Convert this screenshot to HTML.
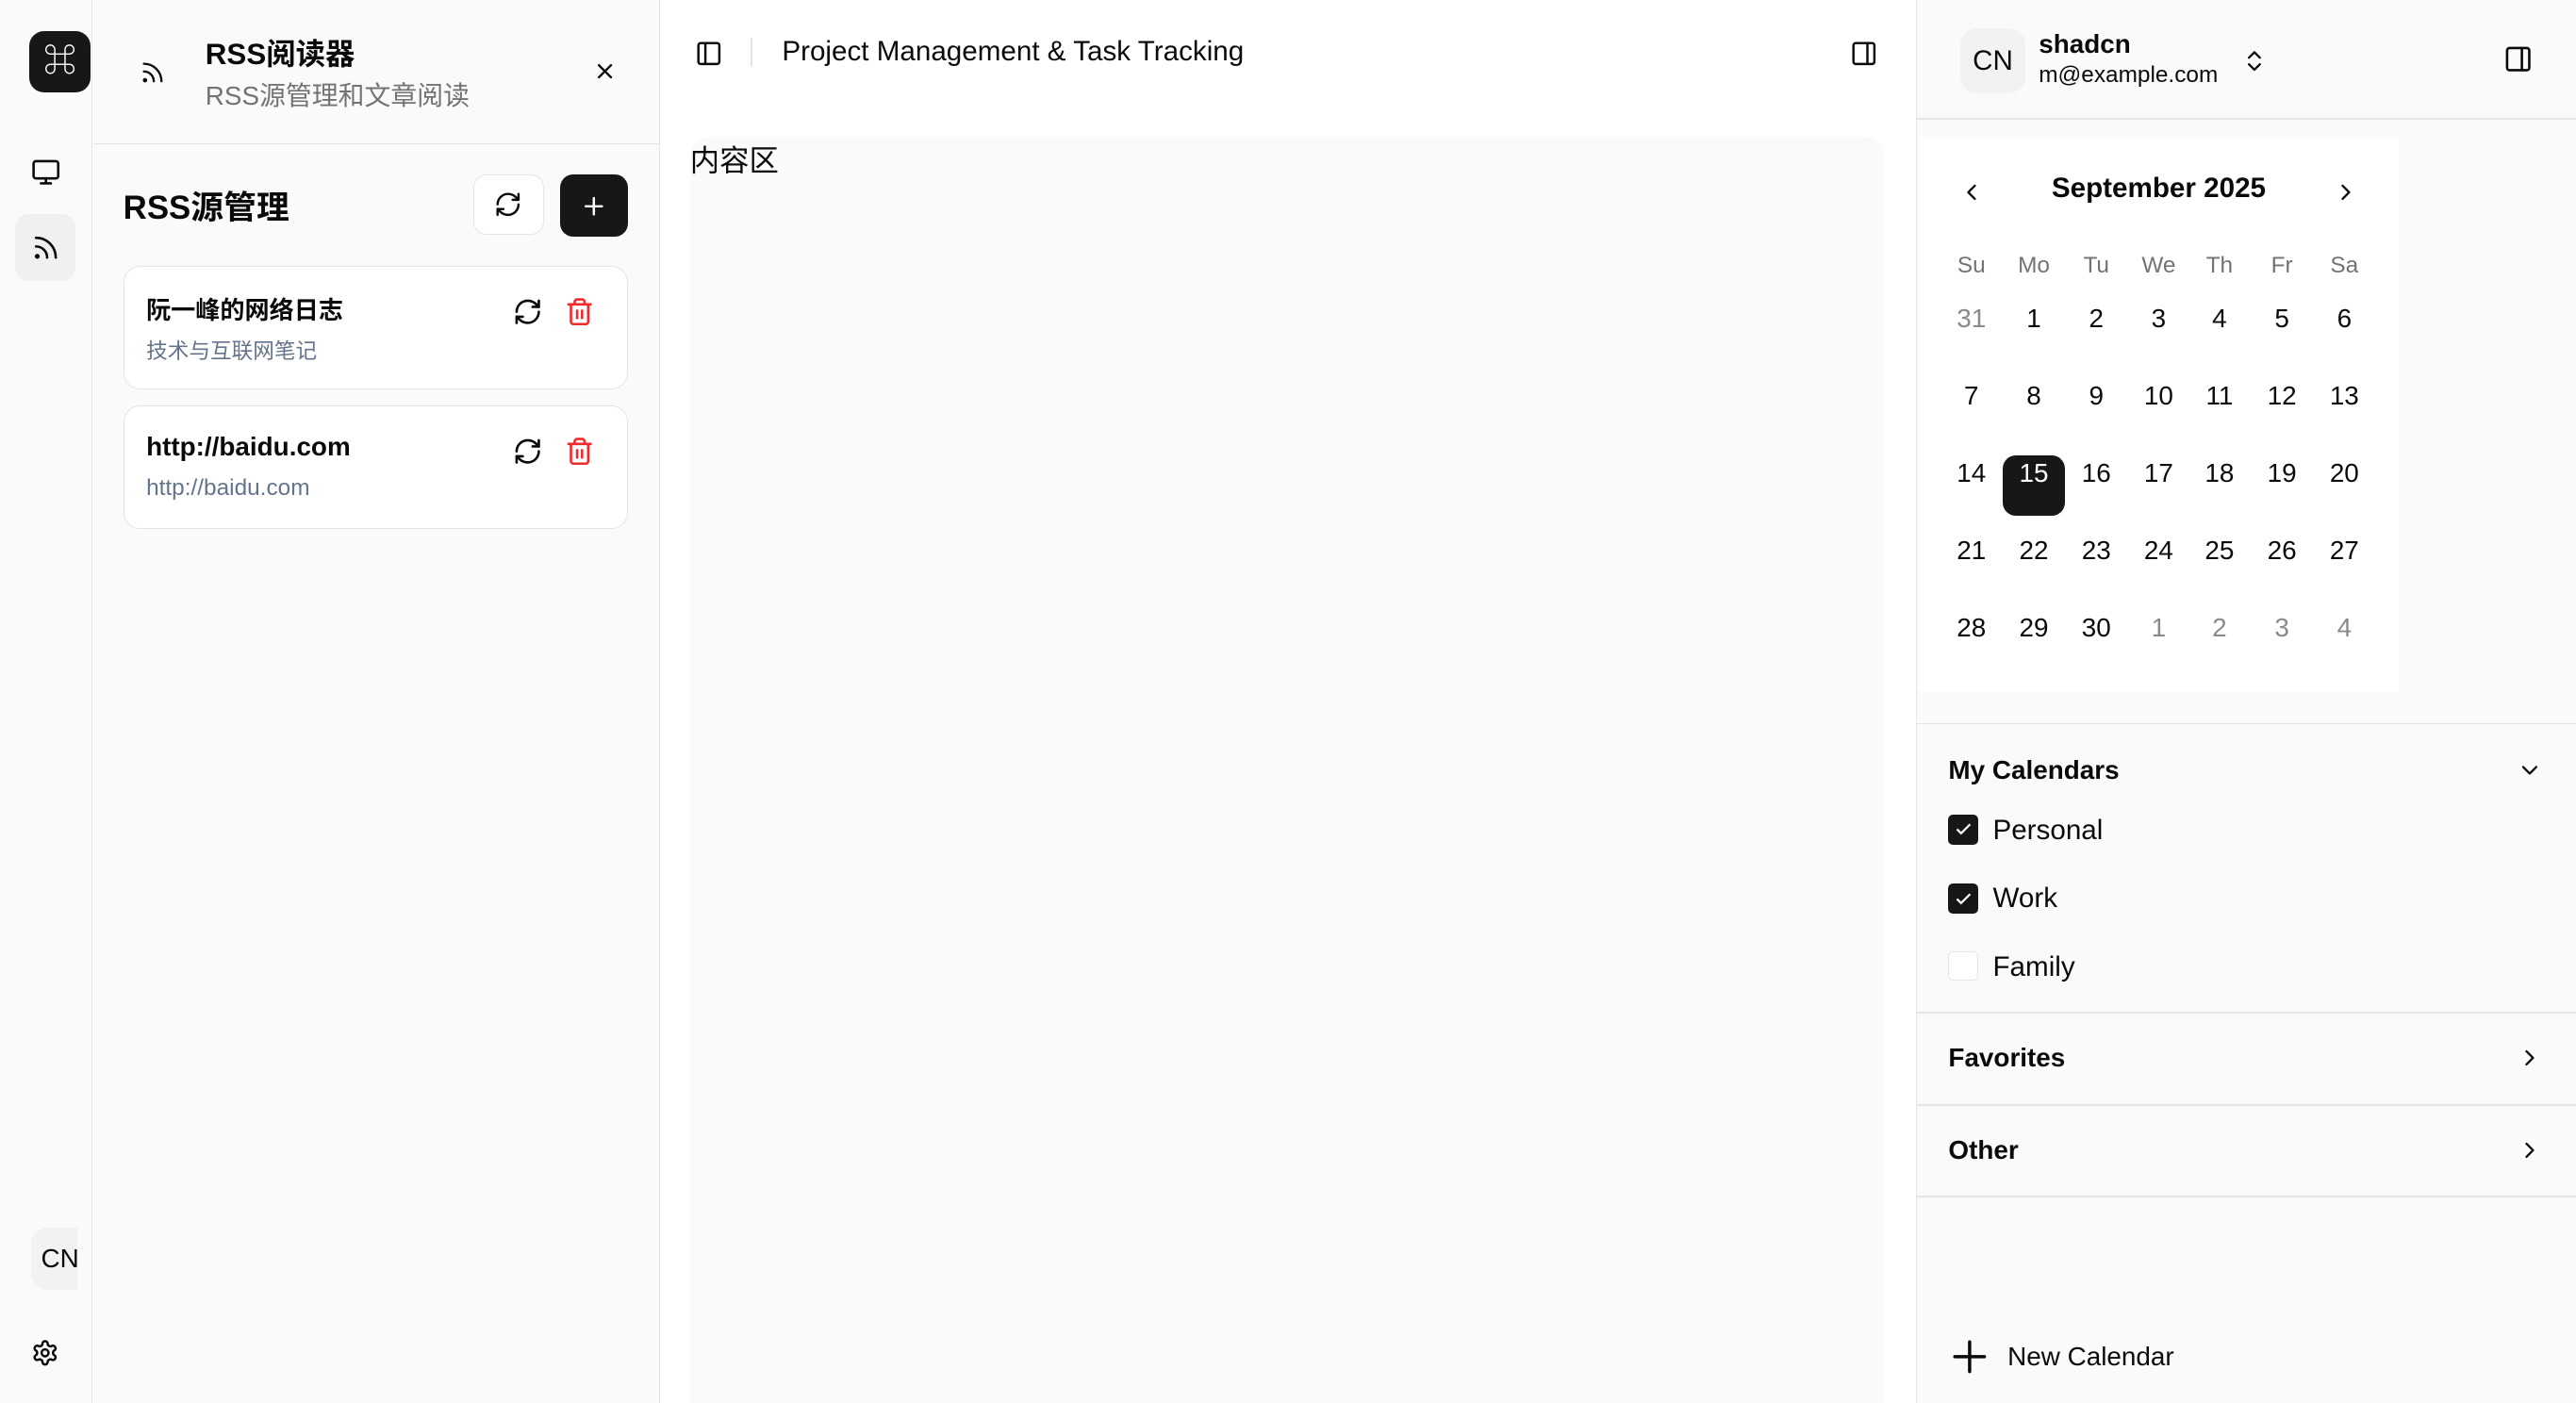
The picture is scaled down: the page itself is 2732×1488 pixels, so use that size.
<!DOCTYPE html>
<html><head><meta charset="utf-8"><style>
*{box-sizing:border-box;margin:0;padding:0}
html,body{width:2732px;height:1488px;overflow:hidden;background:#fff}
#r{position:absolute;left:0;top:0;width:1568px;height:854px;overflow:hidden;zoom:1.74235;font-family:"Liberation Sans","Noto Sans CJK SC",sans-serif;color:#0a0a0a}
.a{position:absolute}
svg{display:block}
.ic{fill:none;stroke:#0a0a0a;stroke-width:2;stroke-linecap:round;stroke-linejoin:round}
.cal span{position:absolute;width:38px;text-align:center;font-size:16px;transform:translateY(-50%)}
.hd{color:#737373;font-size:14px!important}
.mu{color:#8a8a8a}
.line{position:absolute;left:1167px;width:401px;height:1px;background:#e5e5e5}
.cb{position:absolute;left:1186px;width:18px;height:18px;border-radius:3px;background:#171717}
</style></head><body><div id="r">
<!-- rail -->
<div class="a" style="left:0;top:0;width:56px;height:854px;background:#fafafa;border-right:1px solid #e5e5e5"></div>
<div class="a" style="left:18px;top:19px;width:37px;height:37px;border-radius:9px;background:#171717;color:#fff;font-size:20px;text-align:center;line-height:37px">⌘</div>
<svg class="a ic" style="left:19px;top:96px" width="18" height="18" viewBox="0 0 24 24"><rect x="2" y="3" width="20" height="14" rx="2"/><path d="M8 21h8M12 17v4"/></svg>
<div class="a" style="left:9px;top:130px;width:37px;height:41px;border-radius:8px;background:#f0f0f0"></div>
<svg class="a ic" style="left:19px;top:142px" width="18" height="18" viewBox="0 0 24 24"><path d="M4 11a9 9 0 0 1 9 9M4 4a16 16 0 0 1 16 16"/><circle cx="5" cy="19" r="1"/></svg>
<div class="a" style="left:19px;top:747px;width:28px;height:38px;border-radius:10px 0 0 10px;background:#f2f2f2;overflow:hidden;font-size:16px;line-height:38px;padding-left:6px">CN</div>
<svg class="a ic" style="left:19px;top:815px" width="17" height="17" viewBox="0 0 24 24"><path d="M12.22 2h-.44a2 2 0 0 0-2 2v.18a2 2 0 0 1-1 1.73l-.43.25a2 2 0 0 1-2 0l-.15-.08a2 2 0 0 0-2.73.73l-.22.38a2 2 0 0 0 .73 2.730l.15.1a2 2 0 0 1 1 1.72v.51a2 2 0 0 1-1 1.74l-.15.09a2 2 0 0 0-.73 2.73l.22.38a2 2 0 0 0 2.73.73l.15-.08a2 2 0 0 1 2 0l.43.25a2 2 0 0 1 1 1.73V20a2 2 0 0 0 2 2h.44a2 2 0 0 0 2-2v-.18a2 2 0 0 1 1-1.73l.43-.25a2 2 0 0 1 2 0l.15.08a2 2 0 0 0 2.73-.73l.22-.39a2 2 0 0 0-.73-2.73l-.15-.08a2 2 0 0 1-1-1.74v-.5a2 2 0 0 1 1-1.74l.15-.09a2 2 0 0 0 .73-2.73l-.22-.38a2 2 0 0 0-2.73-.73l-.15.08a2 2 0 0 1-2 0l-.43-.25a2 2 0 0 1-1-1.73V4a2 2 0 0 0-2-2z"/><circle cx="12" cy="12" r="3"/></svg>
<!-- panel 2 -->
<div class="a" style="left:57px;top:0;width:345px;height:854px;background:#fafafa;border-right:1px solid #e5e5e5"></div>
<div class="a" style="left:57px;top:87px;width:344px;height:1px;background:#e5e5e5"></div>
<svg class="a ic" style="left:85px;top:36px" width="16" height="16" viewBox="0 0 24 24"><path d="M4 11a9 9 0 0 1 9 9M4 4a16 16 0 0 1 16 16"/><circle cx="5" cy="19" r="1"/></svg>
<div class="a" style="left:125px;top:19px;font-size:18px;font-weight:bold">RSS阅读器</div>
<div class="a" style="left:125px;top:46px;font-size:16px;color:#737373">RSS源管理和文章阅读</div>
<svg class="a ic" style="left:363px;top:38px" width="11" height="11" viewBox="0 0 24 24"><path d="M4 4l16 16M20 4L4 20" stroke-width="3"/></svg>
<div class="a" style="left:75px;top:111px;font-size:20px;font-weight:bold">RSS源管理</div>
<div class="a" style="left:288px;top:106px;width:43px;height:37px;border:1px solid #e5e5e5;border-radius:8px;background:#fff"></div>
<svg class="a ic" style="left:301px;top:116px" width="17" height="17" viewBox="0 0 24 24"><path d="M3 12a9 9 0 0 1 9-9 9.75 9.75 0 0 1 6.74 2.74L21 8"/><path d="M21 3v5h-5"/><path d="M21 12a9 9 0 0 1-9 9 9.75 9.75 0 0 1-6.74-2.74L3 16"/><path d="M8 16H3v5"/></svg>
<div class="a" style="left:341px;top:106px;width:41px;height:38px;border-radius:8px;background:#171717"></div>
<svg class="a" style="left:353px;top:117px" width="17" height="17" viewBox="0 0 24 24" fill="none" stroke="#fff" stroke-width="2" stroke-linecap="round"><path d="M5 12h14M12 5v14"/></svg>
<div class="a" style="left:75px;top:162px;width:307px;height:75px;border:1px solid #e5e5e5;border-radius:10px;background:#fff"></div>
<div class="a" style="left:89px;top:177px;font-size:15px;font-weight:bold">阮一峰的网络日志</div>
<div class="a" style="left:89px;top:203px;font-size:13px;color:#64748b">技术与互联网笔记</div>
<div class="a" style="left:75px;top:247px;width:307px;height:75px;border:1px solid #e5e5e5;border-radius:10px;background:#fff"></div>
<div class="a" style="left:89px;top:263px;font-size:16px;font-weight:bold">http://baidu.com</div>
<div class="a" style="left:89px;top:289px;font-size:14px;color:#64748b">http://baidu.com</div>
<svg class="a ic" style="left:312px;top:181px" width="18" height="18" viewBox="0 0 24 24"><path d="M3 12a9 9 0 0 1 9-9 9.75 9.75 0 0 1 6.74 2.74L21 8"/><path d="M21 3v5h-5"/><path d="M21 12a9 9 0 0 1-9 9 9.75 9.75 0 0 1-6.74-2.74L3 16"/><path d="M8 16H3v5"/></svg>
<svg class="a ic" style="left:312px;top:266px" width="18" height="18" viewBox="0 0 24 24"><path d="M3 12a9 9 0 0 1 9-9 9.75 9.75 0 0 1 6.74 2.74L21 8"/><path d="M21 3v5h-5"/><path d="M21 12a9 9 0 0 1-9 9 9.75 9.75 0 0 1-6.74-2.74L3 16"/><path d="M8 16H3v5"/></svg>
<svg class="a" style="left:344px;top:181px" width="18" height="18" viewBox="0 0 24 24" fill="none" stroke="#ef2b2d" stroke-width="2" stroke-linecap="round"><path d="M3 6h18M19 6v14a2 2 0 0 1-2 2H7a2 2 0 0 1-2-2V6M8 6V4a2 2 0 0 1 2-2h4a2 2 0 0 1 2 2v2M10 11v6M14 11v6"/></svg>
<svg class="a" style="left:344px;top:266px" width="18" height="18" viewBox="0 0 24 24" fill="none" stroke="#ef2b2d" stroke-width="2" stroke-linecap="round"><path d="M3 6h18M19 6v14a2 2 0 0 1-2 2H7a2 2 0 0 1-2-2V6M8 6V4a2 2 0 0 1 2-2h4a2 2 0 0 1 2 2v2M10 11v6M14 11v6"/></svg>
<!-- main -->
<svg class="a ic" style="left:423px;top:24px" width="17" height="17" viewBox="0 0 24 24"><rect x="3" y="3" width="18" height="18" rx="2"/><path d="M9 3v18"/></svg>
<div class="a" style="left:457px;top:23px;width:1px;height:18px;background:#e5e5e5"></div>
<div class="a" style="left:476px;top:22px;font-size:17px">Project Management &amp; Task Tracking</div>
<svg class="a ic" style="left:1126px;top:24px" width="17" height="17" viewBox="0 0 24 24"><rect x="3" y="3" width="18" height="18" rx="2"/><path d="M15 3v18"/></svg>
<div class="a" style="left:420px;top:83px;width:727px;height:771px;border-radius:12px 12px 0 0;background:#fafafa"></div>
<div class="a" style="left:420px;top:84px;font-size:18px">内容区</div>
<!-- right -->
<div class="a" style="left:1166px;top:0;width:402px;height:854px;background:#fafafa;border-left:1px solid #e5e5e5"></div>
<div class="line" style="top:72px"></div>
<div class="a" style="left:1193px;top:17px;width:40px;height:40px;border-radius:10px;background:#f2f2f2;font-size:17px;line-height:40px;text-align:center">CN</div>
<div class="a" style="left:1241px;top:18px;font-size:16px;font-weight:bold">shadcn</div>
<div class="a" style="left:1241px;top:38px;font-size:14px">m@example.com</div>
<svg class="a ic" style="left:1364px;top:28px" width="16" height="18" viewBox="0 0 24 24"><path d="M7 9l5-5 5 5M7 15l5 5 5-5"/></svg>
<svg class="a ic" style="left:1524px;top:27px" width="18" height="18" viewBox="0 0 24 24"><rect x="3" y="3" width="18" height="18" rx="2"/><path d="M15 3v18"/></svg>
<div class="a" style="left:1168px;top:83px;width:292px;height:338px;background:#fff"></div>
<svg class="a ic" style="left:1192px;top:109px" width="16" height="16" viewBox="0 0 24 24"><path d="M15 18l-6-6 6-6"/></svg>
<svg class="a ic" style="left:1420px;top:109px" width="16" height="16" viewBox="0 0 24 24"><path d="M9 18l6-6-6-6"/></svg>
<div class="a" style="left:1168px;top:105px;width:292px;text-align:center;font-size:17px;font-weight:bold">September 2025</div>
<div class="a" style="left:1219px;top:277px;width:38px;height:37px;border-radius:8px;background:#171717"></div>
<div class="a cal" style="left:0;top:1px">
<span class="hd" style="left:1181px;top:161px">Su</span><span class="hd" style="left:1219px;top:161px">Mo</span><span class="hd" style="left:1257px;top:161px">Tu</span><span class="hd" style="left:1295px;top:161px">We</span><span class="hd" style="left:1332px;top:161px">Th</span><span class="hd" style="left:1370px;top:161px">Fr</span><span class="hd" style="left:1408px;top:161px">Sa</span>
<span class="mu" style="left:1181px;top:193px">31</span><span style="left:1219px;top:193px">1</span><span style="left:1257px;top:193px">2</span><span style="left:1295px;top:193px">3</span><span style="left:1332px;top:193px">4</span><span style="left:1370px;top:193px">5</span><span style="left:1408px;top:193px">6</span>
<span style="left:1181px;top:240px">7</span><span style="left:1219px;top:240px">8</span><span style="left:1257px;top:240px">9</span><span style="left:1295px;top:240px">10</span><span style="left:1332px;top:240px">11</span><span style="left:1370px;top:240px">12</span><span style="left:1408px;top:240px">13</span>
<span style="left:1181px;top:287px">14</span><span style="left:1219px;top:287px;color:#fff">15</span><span style="left:1257px;top:287px">16</span><span style="left:1295px;top:287px">17</span><span style="left:1332px;top:287px">18</span><span style="left:1370px;top:287px">19</span><span style="left:1408px;top:287px">20</span>
<span style="left:1181px;top:334px">21</span><span style="left:1219px;top:334px">22</span><span style="left:1257px;top:334px">23</span><span style="left:1295px;top:334px">24</span><span style="left:1332px;top:334px">25</span><span style="left:1370px;top:334px">26</span><span style="left:1408px;top:334px">27</span>
<span style="left:1181px;top:381px">28</span><span style="left:1219px;top:381px">29</span><span style="left:1257px;top:381px">30</span><span class="mu" style="left:1295px;top:381px">1</span><span class="mu" style="left:1332px;top:381px">2</span><span class="mu" style="left:1370px;top:381px">3</span><span class="mu" style="left:1408px;top:381px">4</span>
</div>
<div class="line" style="top:440px"></div>
<div class="a" style="left:1186px;top:460px;font-size:16px;font-weight:bold">My Calendars</div>
<svg class="a ic" style="left:1532px;top:461px" width="16" height="16" viewBox="0 0 24 24"><path d="M6 9l6 6 6-6"/></svg>
<div class="cb" style="top:496px"></div><svg class="a" style="left:1189px;top:499px" width="12" height="12" viewBox="0 0 24 24" fill="none" stroke="#fff" stroke-width="2.5"><path d="M4 12l5 5 11-11"/></svg>
<div class="a" style="left:1213px;top:496px;font-size:17px">Personal</div>
<div class="cb" style="top:538px"></div><svg class="a" style="left:1189px;top:541px" width="12" height="12" viewBox="0 0 24 24" fill="none" stroke="#fff" stroke-width="2.5"><path d="M4 12l5 5 11-11"/></svg>
<div class="a" style="left:1213px;top:537px;font-size:17px">Work</div>
<div class="cb" style="top:579px;background:#fff;border:1px solid #e5e5e5"></div>
<div class="a" style="left:1213px;top:579px;font-size:17px">Family</div>
<div class="line" style="top:616px"></div>
<div class="a" style="left:1186px;top:635px;font-size:16px;font-weight:bold">Favorites</div>
<svg class="a ic" style="left:1532px;top:636px" width="16" height="16" viewBox="0 0 24 24"><path d="M9 18l6-6-6-6"/></svg>
<div class="line" style="top:672px"></div>
<div class="a" style="left:1186px;top:691px;font-size:16px;font-weight:bold">Other</div>
<svg class="a ic" style="left:1532px;top:692px" width="16" height="16" viewBox="0 0 24 24"><path d="M9 18l6-6-6-6"/></svg>
<div class="line" style="top:728px"></div>
<svg class="a ic" style="left:1187px;top:814px" width="24" height="24" viewBox="0 0 24 24"><path d="M3 12h18M12 3v18"/></svg>
<div class="a" style="left:1222px;top:817px;font-size:16px">New Calendar</div>
</div></body></html>
